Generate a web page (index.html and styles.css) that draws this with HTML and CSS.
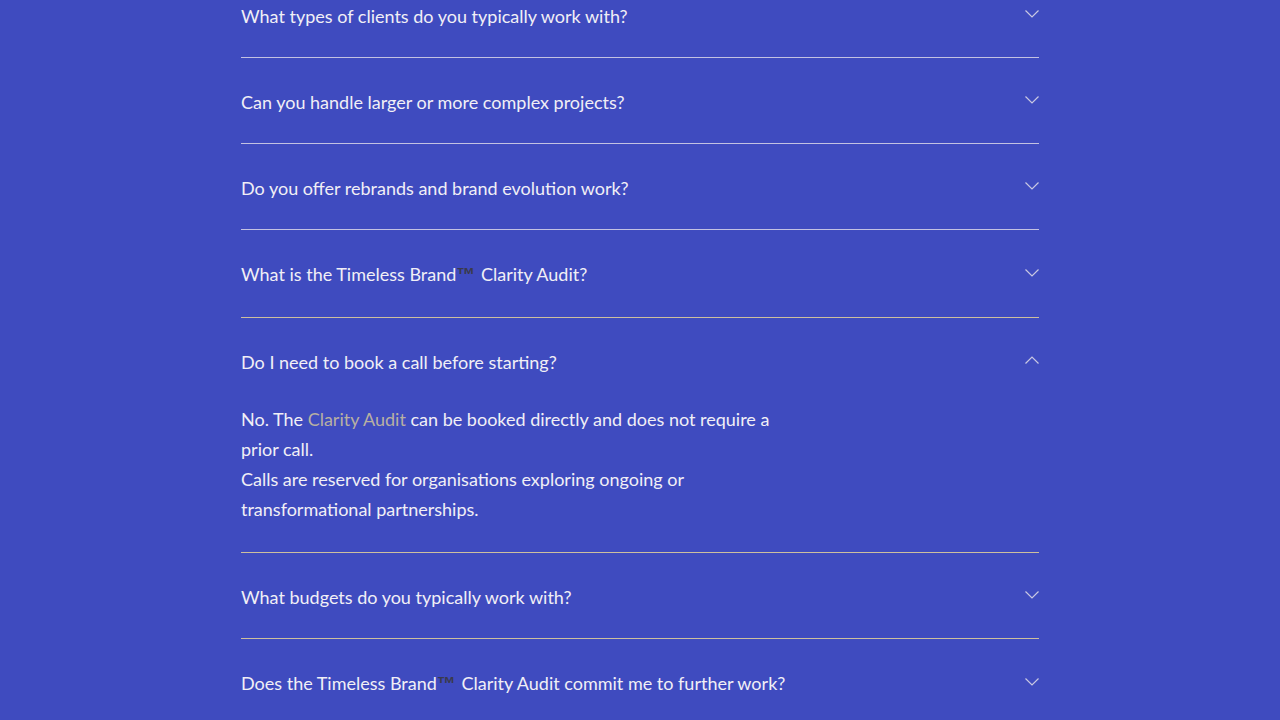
FILE: index.html
```html
<!DOCTYPE html>
<html lang="en">
<head>
<meta charset="utf-8">
<title>FAQ</title>
<link rel="stylesheet" href="styles.css">
</head>
<body>
<section class="faq">
  <div class="faq-item">
    <div class="faq-q"><span class="q-text">What types of clients do you typically work with?</span><svg class="chev" viewBox="0 0 14 8"><polyline points="0.5,0.5 7,7 13.5,0.5"/></svg></div>
  </div>
  <div class="faq-item">
    <div class="faq-q"><span class="q-text">Can you handle larger or more complex projects?</span><svg class="chev" viewBox="0 0 14 8"><polyline points="0.5,0.5 7,7 13.5,0.5"/></svg></div>
  </div>
  <div class="faq-item">
    <div class="faq-q"><span class="q-text">Do you offer rebrands and brand evolution work?</span><svg class="chev" viewBox="0 0 14 8"><polyline points="0.5,0.5 7,7 13.5,0.5"/></svg></div>
  </div>
  <div class="faq-item warm">
    <div class="faq-q"><span class="q-text">What is the Timeless Brand<span class="tm">™</span> Clarity Audit?</span><svg class="chev" viewBox="0 0 14 8"><polyline points="0.5,0.5 7,7 13.5,0.5"/></svg></div>
  </div>
  <div class="faq-item warm open">
    <div class="faq-q"><span class="q-text">Do I need to book a call before starting?</span><svg class="chev up" viewBox="0 0 14 8"><polyline points="0.5,7.5 7,1 13.5,7.5"/></svg></div>
    <div class="faq-a">
      <p>No. The <a class="link" href="#">Clarity Audit</a> can be booked directly and does not require a prior call.</p>
      <p>Calls are reserved for organisations exploring ongoing or transformational partnerships.</p>
    </div>
  </div>
  <div class="faq-item warm">
    <div class="faq-q"><span class="q-text">What budgets do you typically work with?</span><svg class="chev" viewBox="0 0 14 8"><polyline points="0.5,0.5 7,7 13.5,0.5"/></svg></div>
  </div>
  <div class="faq-item warm">
    <div class="faq-q"><span class="q-text">Does the Timeless Brand<span class="tm">™</span> Clarity Audit commit me to further work?</span><svg class="chev" viewBox="0 0 14 8"><polyline points="0.5,0.5 7,7 13.5,0.5"/></svg></div>
  </div>
</section>
</body>
</html>
```
FILE: styles.css
```css
html, body {
  margin: 0;
  padding: 0;
  background: #3f4bbf;
  overflow: hidden;
}
body {
  font-family: "Lato", "Noto Sans", sans-serif;
  color: #f1eff6;
  font-size: 18px;
}
.faq {
  width: 798px;
  margin: -28px auto 0;
}
.faq-item {
  border-bottom: 1px solid #c3c2e2;
}
.faq-item.warm {
  border-bottom-color: #cdbf9e;
}
.faq-q {
  display: flex;
  justify-content: space-between;
  align-items: center;
  padding: 31px 0 28px;
  line-height: 26px;
}
.tm {
  display: inline-block;
  vertical-align: top;
  font-family: "Liberation Sans", sans-serif;
  color: #3a3a4c;
  font-weight: 700;
  font-size: 19px;
  line-height: 28px;
  margin: 0 1px 0 0;
}
.chev {
  width: 14px;
  height: 8px;
  fill: none;
  stroke: #c9c8e2;
  stroke-width: 1.2;
  margin-top: -4px;
  flex-shrink: 0;
}
.chev.up {
  margin-top: -5px;
}
.faq-a {
  max-width: 570px;
  padding: 1px 0 28px;
  line-height: 30px;
}
.faq-a p {
  margin: 0;
}
.link {
  color: #b8b0a2;
  text-decoration: none;
}
```
